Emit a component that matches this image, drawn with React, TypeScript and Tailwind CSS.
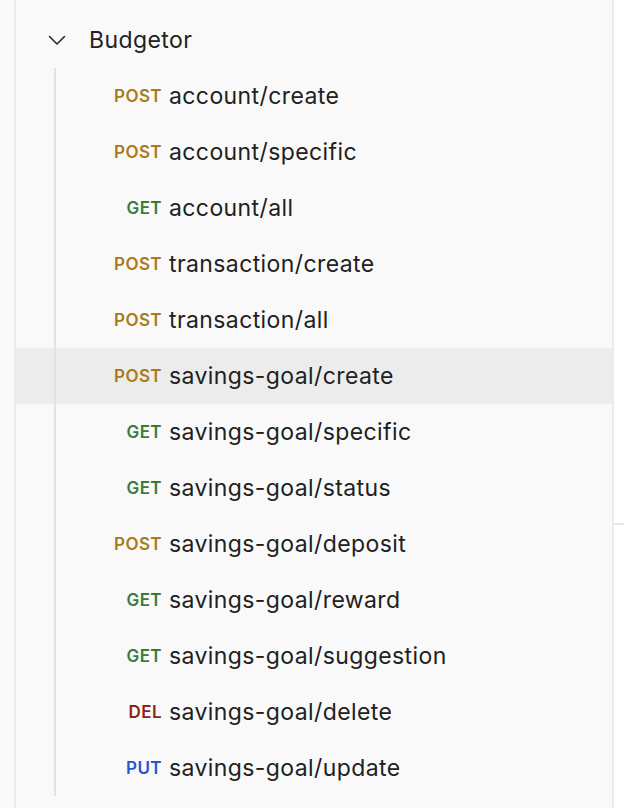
import React from 'react';

type Method = 'POST' | 'GET' | 'DEL' | 'PUT';

interface Endpoint {
  method: Method;
  path: string;
  active?: boolean;
}

const methodColor: Record<Method, string> = {
  POST: 'text-[#a97a1c]',
  GET: 'text-[#3a7b38]',
  DEL: 'text-[#8e2414]',
  PUT: 'text-[#2657c6]',
};

const endpoints: Endpoint[] = [
  { method: 'POST', path: 'account/create' },
  { method: 'POST', path: 'account/specific' },
  { method: 'GET', path: 'account/all' },
  { method: 'POST', path: 'transaction/create' },
  { method: 'POST', path: 'transaction/all' },
  { method: 'POST', path: 'savings-goal/create', active: true },
  { method: 'GET', path: 'savings-goal/specific' },
  { method: 'GET', path: 'savings-goal/status' },
  { method: 'POST', path: 'savings-goal/deposit' },
  { method: 'GET', path: 'savings-goal/reward' },
  { method: 'GET', path: 'savings-goal/suggestion' },
  { method: 'DEL', path: 'savings-goal/delete' },
  { method: 'PUT', path: 'savings-goal/update' },
];

const Chevron = () => (
  <svg width="18" height="11" viewBox="0 0 18 11" fill="none">
    <polyline points="1.5,1.5 9,9 16.5,1.5" stroke="#2a2a2a" strokeWidth="1.6" strokeLinecap="round" strokeLinejoin="round" />
  </svg>
);

export default function App() {
  return (
    <div className="w-[624px] h-[808px] flex bg-white font-['Inter','Noto_Sans',sans-serif] text-[#212121] overflow-hidden">
      <div className="w-[14px] bg-[#f9f9f9]" />

      {/* collection tree */}
      <div className="w-[600px] h-full bg-[#f9f9f9] border-l-2 border-r-2 border-[#ebebeb] pt-[12px]">
        <div className="h-[56px] flex items-center pl-[32px]">
          <Chevron />
          <span className="ml-[23px] text-[23px] leading-none tracking-[0.4px]">Budgetor</span>
        </div>

        <div>
          {endpoints.map((ep) => (
            <div
              key={ep.path}
              className={`h-[56px] flex items-stretch ${ep.active ? 'bg-[#ececec]' : 'hover:bg-[#ececec]'}`}
            >
              <div className="w-[38px]" />
              <div className="w-[2px] bg-[#e2e2e2]" />
              <div className="w-[106px] flex items-center justify-end">
                <span className={`text-[17px] font-semibold leading-none tracking-[0.4px] ${methodColor[ep.method]}`}>
                  {ep.method}
                </span>
              </div>
              <div className="ml-[7px] flex items-center text-[23px] leading-none tracking-[0.4px]">
                {ep.path}
              </div>
            </div>
          ))}
        </div>
      </div>

      <div className="w-[10px] flex flex-col">
        <div className="mt-[523px] h-[2px] bg-[#e8e8e8]" />
      </div>
    </div>
  );
}
